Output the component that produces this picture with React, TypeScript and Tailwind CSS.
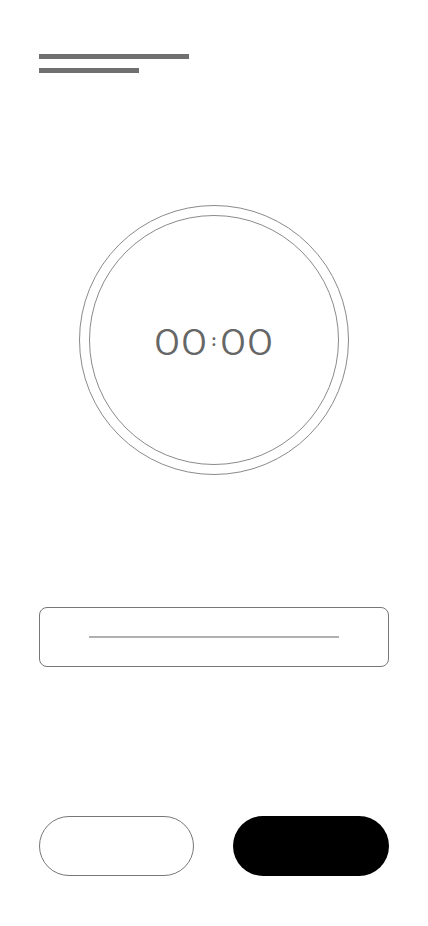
import React from "react";

const Digit = ({ value }: { value: string }) => (
  <span className="inline-flex w-[27px] justify-center">
    <span className="inline-block scale-x-[1.22]">{value}</span>
  </span>
);

export default function App() {
  return (
    <div className="min-h-[926px] w-[428px] bg-white px-[39px] font-['Inter',sans-serif]">
      {/* title placeholder */}
      <div className="pt-[54px]">
        <div className="h-[5px] w-[150px] bg-[#707070]" />
        <div className="mt-[9px] h-[5px] w-[100px] bg-[#707070]" />
      </div>

      {/* timer dial */}
      <div className="mt-[132px] flex justify-center">
        <div className="h-[270px] w-[270px] rounded-full border border-[#8a8a8a] p-[9px]">
          <div className="flex h-full w-full items-center justify-center rounded-full border border-[#8a8a8a]">
            <div className="flex items-center pt-[3px] text-[36px] font-light leading-none text-[#666]">
              <Digit value="0" />
              <Digit value="0" />
              <span className="inline-flex w-[12px] -translate-y-[2px] justify-center text-[16px] font-bold">:</span>
              <Digit value="0" />
              <Digit value="0" />
            </div>
          </div>
        </div>
      </div>

      {/* input */}
      <div className="mt-[132px] flex h-[60px] items-center justify-center rounded-lg border border-[#777]">
        <div className="h-[2px] w-[250px] bg-[#b0b0b0]" />
      </div>

      {/* actions */}
      <div className="mt-[149px] flex justify-between">
        <button className="h-[60px] w-[155px] rounded-full border border-[#777] bg-white" />
        <button className="h-[60px] w-[156px] rounded-full bg-black" />
      </div>
    </div>
  );
}
